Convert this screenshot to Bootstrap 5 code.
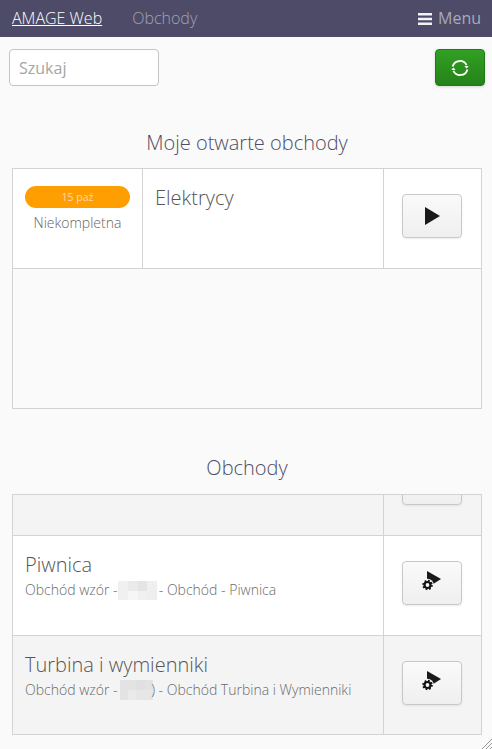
<!DOCTYPE html>
<html lang="pl">
<head>
<meta charset="utf-8">
<title>AMAGE Web</title>
<link href="https://cdn.jsdelivr.net/npm/bootstrap@5.3.0/dist/css/bootstrap.min.css" rel="stylesheet">
<style>
html,body{height:749px;overflow:hidden}
body{background:#fafafa;font-family:"Open Sans",sans-serif;font-weight:300;color:#555;font-size:14px}
.topbar{background:#4d4b68;height:37px;padding:0 11px 0 12px;font-size:16px;line-height:37px}
.brandlink{color:#fff;text-decoration:underline;font-weight:300}
.navlink{color:#a3a2b3;margin-left:30px;font-weight:300}
.menulink{color:#a9a8b8;font-weight:400}
.menulink svg{margin-right:6px;vertical-align:-1px}
.toolbar{padding:12px 7px 0 9px}
.searchbox{width:150px;height:37px;font-family:inherit;font-size:16px;font-weight:400;border:1px solid #c4c4c4;border-radius:4px;padding:0 9px;color:#555;background:#fff}
.searchbox::placeholder{color:#a5a5a5;opacity:1}
.refreshbtn{width:50px;height:37px;padding:0;background:linear-gradient(#31a024,#258219);border:1px solid #1f7a16;border-radius:4px;box-shadow:0 1px 3px rgba(0,0,0,.15)}
.sectitle{font-size:20px;font-weight:300;color:#4f4e66;text-align:center;line-height:27px;margin:0;padding-left:2px}
.firsttitle{margin-top:43px;margin-bottom:12px}
.secondtitle{margin-top:45px;margin-bottom:13px}
.gridbox{margin:0 10px 0 12px;border:1px solid #d3d3d3;overflow:hidden}
.openbox{height:241px}
.listbox{height:241px}
.gridrow{display:flex;background:#fff;border-bottom:1px solid #d3d3d3}
.listbox .gridrow:last-child{border-bottom:0}
.stripe{background:#f4f4f4}
.fullrow{height:100px}
.cutrow{height:41px}
.statuscell{width:130px;border-right:1px solid #d3d3d3;text-align:center;padding:17px 12px 0}
.pill{display:block;background:#ff9e00;color:#ffd9a0;border-radius:11px;height:22px;line-height:22px;font-size:10.5px;font-weight:400}
.statetext{font-size:14px;line-height:20px;margin-top:5px;color:#666}
.maincell{flex:1;min-width:0;padding:14px 12px 0;overflow:hidden;white-space:nowrap}
.itemtitle{font-size:20px;line-height:30px;color:#555;font-weight:300}
.itemsub{font-size:14px;line-height:20px;color:#6a6a6a;display:flex;align-items:center;white-space:pre}
.actioncell{width:98px;border-left:1px solid #d3d3d3;display:flex;justify-content:center;align-items:flex-start;padding:25px 1px 0 0}
.cutcell{padding-top:0;overflow:hidden}
.cutcell .actbtn{margin-top:-34px}
.actbtn{width:60px;height:44px;padding:0;background:linear-gradient(#fafafa,#efefef);border:1px solid #c8c8c8;border-radius:4px;box-shadow:0 1px 2px rgba(0,0,0,.08);display:flex;align-items:center;justify-content:center}
.blurbox{display:block;flex:none}
.blurone{margin:1px -2px 0 -3px}
.blurtwo{margin:0 0 0 -1px}
.tailtext{margin-left:-2px}
.grip{position:fixed;right:0;bottom:0;display:block}
</style>
</head>
<body>
<nav class="topbar d-flex justify-content-between">
  <div><a class="brandlink" href="#">AMAGE Web</a><a class="navlink text-decoration-none" href="#">Obchody</a></div>
  <a class="menulink text-decoration-none" href="#"><svg width="14" height="12" viewBox="0 0 14 12"><path fill="#f2f2f5" d="M0 0h14v2.6H0zM0 4.7h14v2.6H0zM0 9.4h14V12H0z"/></svg>Menu</a>
</nav>
<div class="toolbar d-flex justify-content-between">
  <input class="searchbox" type="text" placeholder="Szukaj">
  <button class="refreshbtn d-flex align-items-center justify-content-center" type="button" aria-label="Odśwież">
    <svg width="18" height="18" viewBox="0 0 18 18" fill="none" stroke="#fff" stroke-width="1.8"><path d="M1.6 7.6A7.5 7.5 0 0 1 15.6 6.2"/><path d="M16.4 10.4A7.5 7.5 0 0 1 2.4 11.8"/><path fill="#fff" stroke="none" d="M13.4 7h4.4l-2.2 2.6zM.2 11h4.4L2.4 8.4z"/></svg>
  </button>
</div>
<h2 class="sectitle firsttitle">Moje otwarte obchody</h2>
<div class="gridbox openbox">
  <div class="gridrow fullrow">
    <div class="statuscell"><span class="pill">15 paź</span><div class="statetext">Niekompletna</div></div>
    <div class="maincell"><div class="itemtitle">Elektrycy</div></div>
    <div class="actioncell"><button class="actbtn" type="button" aria-label="Start"><svg width="15" height="18" viewBox="0 0 15 18"><path fill="#1a1a1a" d="M0 0l15 9L0 18z"/></svg></button></div>
  </div>
</div>
<h2 class="sectitle secondtitle">Obchody</h2>
<div class="gridbox listbox">
  <div class="gridrow stripe cutrow">
    <div class="maincell"></div>
    <div class="actioncell cutcell"><button class="actbtn" type="button" aria-label="Start"></button></div>
  </div>
  <div class="gridrow fullrow">
    <div class="maincell"><div class="itemtitle">Piwnica</div><div class="itemsub">Obchód wzór - <svg class="blurbox blurone" width="39" height="19" viewBox="0 0 39 19"><rect width="10" height="10" fill="#f0f0ef"/><rect x="10" width="10" height="10" fill="#eaeaea"/><rect x="20" width="9" height="10" fill="#e4e4e4"/><rect x="29" width="10" height="10" fill="#eeeff1"/><rect y="10" width="10" height="9" fill="#f0f0ef"/><rect x="10" y="10" width="10" height="9" fill="#f6f6f4"/><rect x="20" y="10" width="9" height="9" fill="#f0f0f0"/><rect x="29" y="10" width="10" height="9" fill="#edeef0"/></svg> - Obchód - Piwnica</div></div>
    <div class="actioncell"><button class="actbtn" type="button" aria-label="Start z wzoru"><svg width="28" height="28" viewBox="0 0 28 28"><path fill="#1a1a1a" d="M9 2l14 8-14 9z"/><circle cx="9.5" cy="16" r="6.2" fill="#f6f6f6"/><circle cx="9.5" cy="16" r="3" fill="none" stroke="#111" stroke-width="2.2"/><circle cx="9.5" cy="16" r="4.4" fill="none" stroke="#111" stroke-width="1.8" stroke-dasharray="1.7 1.75"/></svg></button></div>
  </div>
  <div class="gridrow stripe fullrow">
    <div class="maincell"><div class="itemtitle">Turbina i wymienniki</div><div class="itemsub">Obchód wzór - <svg class="blurbox blurtwo" width="33" height="20" viewBox="0 0 33 20"><rect width="33" height="20" fill="#e3e3e3"/><rect x="16" width="9" height="10" fill="#e0e0e0"/><rect x="8" y="10" width="8" height="10" fill="#eaeaea"/><rect x="16" y="10" width="17" height="10" fill="#e6e6e6"/></svg><span class="tailtext">) - Obchód Turbina i Wymienniki</span></div></div>
    <div class="actioncell"><button class="actbtn" type="button" aria-label="Start z wzoru"><svg width="28" height="28" viewBox="0 0 28 28"><path fill="#1a1a1a" d="M9 2l14 8-14 9z"/><circle cx="9.5" cy="16" r="6.2" fill="#f6f6f6"/><circle cx="9.5" cy="16" r="3" fill="none" stroke="#111" stroke-width="2.2"/><circle cx="9.5" cy="16" r="4.4" fill="none" stroke="#111" stroke-width="1.8" stroke-dasharray="1.7 1.75"/></svg></button></div>
  </div>
</div>
<svg class="grip" width="10" height="10" viewBox="0 0 10 10" stroke="#9b9b9b" stroke-width="1"><path d="M0 10L10 0M4 10l6-6M8 10l2-2"/></svg>
<script src="https://cdn.jsdelivr.net/npm/bootstrap@5.3.0/dist/js/bootstrap.bundle.min.js"></script>
</body>
</html>
